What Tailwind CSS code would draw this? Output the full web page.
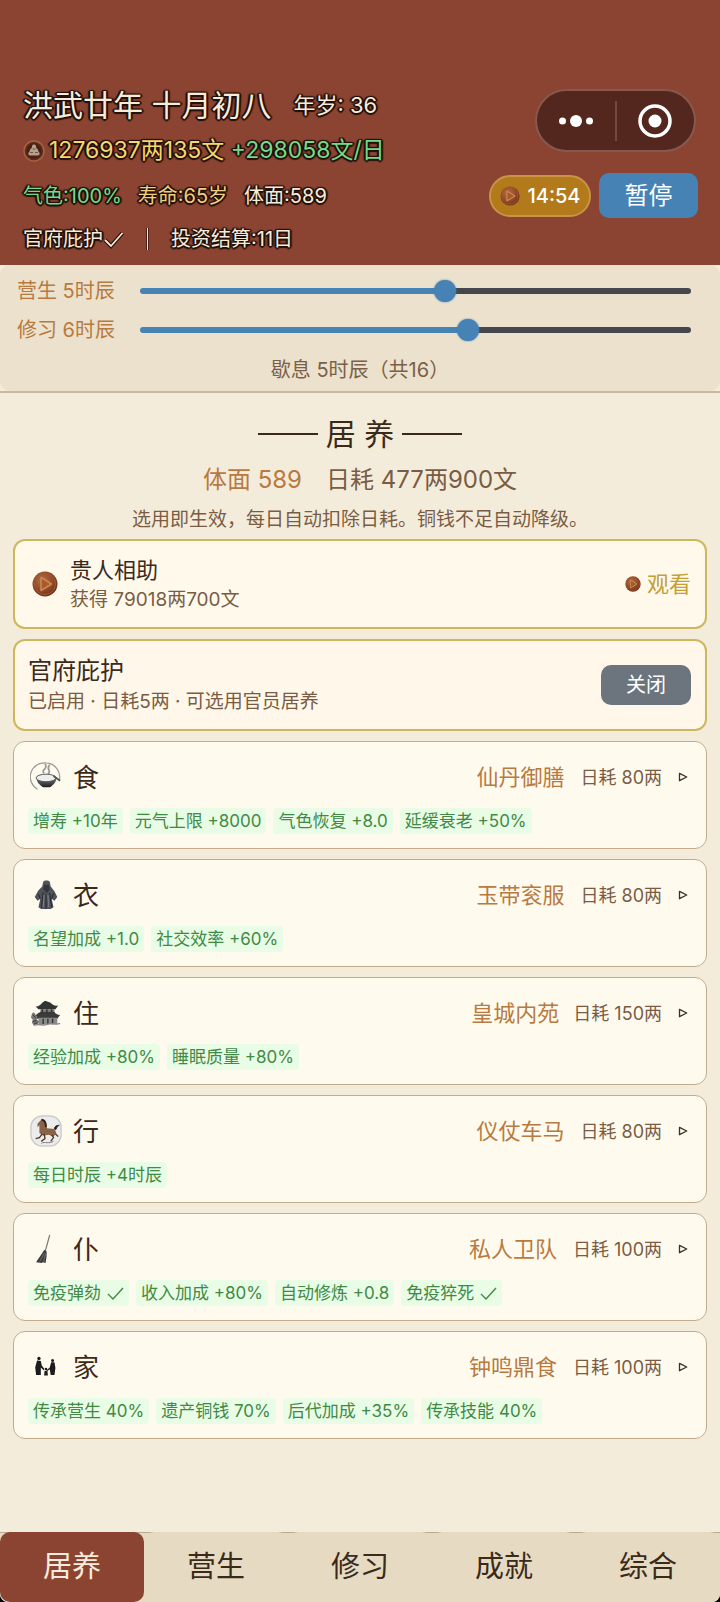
<!DOCTYPE html>
<html lang="zh-CN">
<head>
  <meta charset="UTF-8" />
  <meta name="viewport" content="width=device-width, initial-scale=1.0"/>
  <title>居养</title>
  <!-- Tailwind CSS CDN -->
  <script src="https://cdn.jsdelivr.net/npm/@tailwindcss/browser@4"></script>
</head>
<body class="bg-black font-[Inter,'Noto_Sans_CJK_SC',sans-serif] text-[#3b2a1a]">
  <!-- Degradados compartidos por los iconos -->
  <svg width="0" height="0" class="absolute" aria-hidden="true">
    <defs>
      <radialGradient id="bronze" cx="0.4" cy="0.35" r="0.7">
        <stop offset="0" stop-color="#b8704a"/><stop offset="0.6" stop-color="#8f4726"/><stop offset="1" stop-color="#6b3014"/>
      </radialGradient>
      <linearGradient id="ink" x1="0" y1="0" x2="0" y2="1">
        <stop offset="0" stop-color="#777"/><stop offset="1" stop-color="#1d1d1d"/>
      </linearGradient>
      <symbol id="play" viewBox="0 0 26 26">
        <circle cx="13" cy="13" r="12.5" fill="url(#bronze)"/>
        <circle cx="13" cy="13" r="10.5" fill="none" stroke="#a05a34" stroke-width="1"/>
        <path d="M9 6.500 19.500 13 9 19.500Z" fill="#a9572c" stroke="#c98a50" stroke-width="1.500" stroke-linejoin="round"/>
      </symbol>
      <symbol id="arrow" viewBox="0 0 10 10">
        <path d="M1.500 1.300 8.700 5 1.500 8.700Z" fill="none" stroke="#3b3025" stroke-width="1.300" stroke-linejoin="round"/>
      </symbol>
    </defs>
  </svg>

  <div class="min-h-screen flex flex-col bg-[#f4ecdb] rounded-b-lg overflow-hidden">
    <!-- Cabecera -->
    <header class="bg-[#8b4432] pt-[83px] pb-[7px] pl-[23px] pr-[22px] flex justify-between text-[#f7ecdc] [text-shadow:-1px_-1px_1px_#22100a,1px_-1px_1px_#22100a,-1px_1px_1px_#22100a,1px_1px_1px_#22100a,0_2px_1px_#22100a,2px_0_1px_#22100a,-2px_0_1px_#22100a]">
      <div class="flex flex-col whitespace-nowrap">
        <div class="h-[45px] flex items-center gap-[22px]">
          <h1 class="text-[30px]">洪武廿年 十月初八</h1>
          <span class="text-[22px]">年岁: 36</span>
        </div>
        <div class="h-[45px] flex items-center gap-1 text-[23px]">
          <svg class="size-[22px]" viewBox="0 0 22 22"><circle cx="11" cy="11" r="10" fill="#5d2a1b" stroke="#a3653f" stroke-width="1.500"/><circle cx="11" cy="11" r="7.500" fill="#4a2016"/><path d="M11 4.500c2 0 2.500 2 2 3.500 2 .5 2 2.500 2.500 3.500 1.500 1 1.500 4-.5 4H7c-2 0-2-3-.5-4C7 10.500 7 8.500 9 8c-.5-1.500 0-3.500 2-3.500Z" fill="#b5a08c"/><path d="M7 12.500h3m2 0h3M9.500 9h3" stroke="#6d5647" fill="none"/></svg>
          <span class="text-[#f5d76e]">1276937两135文 <span class="text-[#6fdc8c]">+298058文/日</span></span>
        </div>
        <div class="h-[46px] flex items-center gap-4 text-[20px]">
          <span class="text-[#6fdc8c]">气色:100%</span>
          <span class="text-[#f0d080]">寿命:65岁</span>
          <span>体面:589</span>
        </div>
        <div class="h-[39px] flex items-center gap-[22px] text-[20px]">
          <span class="flex items-center">官府庇护<svg class="w-[21px] h-[20px]" viewBox="0 0 21 20" fill="none"><path d="M2 11l6 6L19.500 4" stroke="#22100a" stroke-width="4"/><path d="M2 11l6 6L19.500 4" stroke="#f7ecdc" stroke-width="1.800"/></svg></span>
          <span class="w-[3px] h-[22px] bg-[#f7ecdc] border-x border-[#4a2016]"></span>
          <span>投资结算:11日</span>
        </div>
      </div>
      <div class="flex flex-col items-end gap-[21px] pt-[6px]">
        <!-- Botones del sistema -->
        <div class="w-[161px] h-[63px] mr-[2px] rounded-full bg-[#53271d] border-2 border-[#87594d] flex items-center">
          <button type="button" aria-label="更多" class="flex-1 h-full flex items-center justify-center"><svg class="w-[34px] h-[12px]" viewBox="0 0 34 12" fill="#fff"><circle cx="3.500" cy="6" r="3.500"/><circle cx="17" cy="6" r="6"/><circle cx="30.500" cy="6" r="3.500"/></svg></button>
          <span class="w-[2px] h-10 bg-[#75493e]"></span>
          <button type="button" aria-label="关闭" class="flex-1 h-full flex items-center justify-center"><svg class="size-[34px]" viewBox="0 0 34 34"><circle cx="17" cy="17" r="15" fill="none" stroke="#fff" stroke-width="3.500"/><circle cx="17" cy="17" r="6.500" fill="#fff"/></svg></button>
        </div>
        <div class="flex items-center gap-2">
          <button type="button" class="w-[102px] h-[42px] rounded-full bg-[#b27a1a] border-2 border-[#c99446] flex items-center justify-center gap-2 text-[20px] font-medium text-white"><svg class="size-[20px]"><use href="#play"/></svg>14:54</button>
          <button type="button" class="w-[99px] h-[45px] rounded-[10px] bg-[#4682b4] text-[24px] text-white [text-shadow:none]">暂停</button>
        </div>
      </div>
    </header>

    <!-- Reparto de horas -->
    <section class="border-b-2 border-[#c9b89a]">
      <div class="h-[126px] rounded-[10px] bg-[#ebe1cd] pt-[6px] text-[20px]">
        <div class="h-[39px] pl-[17px] pr-[29px] flex items-center gap-[21px]">
          <label for="work" class="w-[102px] whitespace-nowrap text-[#b87a40]">营生 5时辰</label>
          <input type="range" id="work" min="0" max="9" value="5" style="--fill:55.6%" class="flex-1 appearance-none h-[6px] rounded-full bg-[linear-gradient(to_right,#4682b4_var(--fill),#46464e_var(--fill))] [&::-webkit-slider-thumb]:appearance-none [&::-webkit-slider-thumb]:size-[22px] [&::-webkit-slider-thumb]:rounded-full [&::-webkit-slider-thumb]:bg-[#4682b4] [&::-webkit-slider-thumb]:shadow-[0_0_2px_#4682b4]" />
        </div>
        <div class="h-[39px] pl-[17px] pr-[29px] flex items-center gap-[21px]">
          <label for="study" class="w-[102px] whitespace-nowrap text-[#b87a40]">修习 6时辰</label>
          <input type="range" id="study" min="0" max="10" value="6" style="--fill:60%" class="flex-1 appearance-none h-[6px] rounded-full bg-[linear-gradient(to_right,#4682b4_var(--fill),#46464e_var(--fill))] [&::-webkit-slider-thumb]:appearance-none [&::-webkit-slider-thumb]:size-[22px] [&::-webkit-slider-thumb]:rounded-full [&::-webkit-slider-thumb]:bg-[#4682b4] [&::-webkit-slider-thumb]:shadow-[0_0_2px_#4682b4]" />
        </div>
        <p class="h-[42px] flex items-center justify-center text-[#7a6048]">歇息 5时辰（共16）</p>
      </div>
    </section>

    <main class="flex-1 px-[13px] pt-[18px]">
      <h2 class="h-[46px] flex items-center justify-center gap-2 text-[30px]"><span class="w-[60px] h-[2px] bg-[#3b2a1a]"></span>居 养<span class="w-[60px] h-[2px] bg-[#3b2a1a]"></span></h2>
      <p class="h-[46px] flex items-center justify-center gap-6 text-[24px] text-[#7a5c44]"><span class="text-[#b87a40]">体面 589</span><span>日耗 477两900文</span></p>
      <p class="h-9 leading-[34px] text-center text-[19px] text-[#7a5c44]">选用即生效，每日自动扣除日耗。铜钱不足自动降级。</p>

      <div class="flex flex-col gap-[10px]">
        <!-- Tarjetas destacadas -->
        <section class="h-[90px] rounded-[12px] border-2 border-[#cdb75f] bg-[#fff9ec] pl-[13px] pr-[14px] flex items-center">
          <svg class="size-[26px] ml-1 mr-3"><use href="#play"/></svg>
          <div class="flex-1 pt-[2px]">
            <h3 class="text-[22px] leading-[30px]">贵人相助</h3>
            <p class="text-[19px] leading-[30px] text-[#7a5c44]">获得 79018两700文</p>
          </div>
          <button type="button" class="flex items-center gap-[6px] text-[22px] text-[#c4a035]"><svg class="size-[16px]"><use href="#play"/></svg>观看</button>
        </section>
        <section class="h-[92px] rounded-[12px] border-2 border-[#cdb75f] bg-[#fff8ea] pl-[13px] pr-[14px] flex items-center">
          <div class="flex-1 pt-[2px]">
            <h3 class="text-[24px] leading-[32px]">官府庇护</h3>
            <p class="text-[19px] leading-[30px] text-[#7a5c44]">已启用 · 日耗5两 · 可选用官员居养</p>
          </div>
          <button type="button" class="w-[90px] h-10 rounded-[10px] bg-[#6c757d] text-[20px] text-white">关闭</button>
        </section>

        <!-- Categorías -->
        <section class="h-[108px] rounded-[12px] border border-[#c4ab8c] bg-[#fffaee] px-[14px] pt-3">
          <div class="h-[46px] flex items-center">
            <svg class="size-8 ml-[2px] mr-[11px]" viewBox="0 0 34 34" fill="none"><path d="M8 30A15 15 0 0 1 17 2a15 15 0 0 1 14 19" stroke="#999" stroke-width="1.300"/><path d="M15 13c-4-4 5-4 1-10m3 11c5-3-3-5 2-10" stroke="#999" stroke-width="1.800"/><path d="M7 18c0 6 5 8 7 10h7c3-2 7-5 7-10Z" fill="url(#ink)"/><ellipse cx="17" cy="18" rx="10.500" ry="4" fill="#eee" stroke="#555"/><path d="M25 16l7 5" stroke="#555" stroke-width="2"/></svg>
            <h3 class="flex-1 text-[26px]">食</h3>
            <span class="text-[22px] text-[#b87a40]">仙丹御膳</span><span class="ml-4 text-[18px] text-[#7a5c44]">日耗 80两</span><svg class="size-[10px] ml-4 mr-1"><use href="#arrow"/></svg>
          </div>
          <ul class="mt-2 flex gap-[7px] text-[17px] leading-[26px] text-[#3f8a45] whitespace-nowrap">
            <li class="px-[5px] rounded bg-[#e9fce6]">增寿 +10年</li><li class="px-[5px] rounded bg-[#e9fce6]">元气上限 +8000</li><li class="px-[5px] rounded bg-[#e9fce6]">气色恢复 +8.0</li><li class="px-[5px] rounded bg-[#e9fce6]">延缓衰老 +50%</li>
          </ul>
        </section>
        <section class="h-[108px] rounded-[12px] border border-[#c4ab8c] bg-[#fffaee] px-[14px] pt-3">
          <div class="h-[46px] flex items-center">
            <svg class="size-8 ml-[2px] mr-[11px]" viewBox="0 0 34 34"><path d="M14 3c1-2 6-2 7 0l1 5 4 5 3 6-3 4-3-2 2 9-3 2H12l-3-2 2-9-3 2-3-4 4-7 4-4Z" fill="#50535a"/><path d="M15 6h5l1 5-3 4-4-4Z" fill="#33363b"/><path d="M14 14l-2 17m5-15v16m4-17 2 15M9 16l2 5m14-6-2 6" stroke="#22252b" fill="none"/><path d="M15 17l-1 13m5-13 1 13" stroke="#858891" fill="none"/></svg>
            <h3 class="flex-1 text-[26px]">衣</h3>
            <span class="text-[22px] text-[#b87a40]">玉带衮服</span><span class="ml-4 text-[18px] text-[#7a5c44]">日耗 80两</span><svg class="size-[10px] ml-4 mr-1"><use href="#arrow"/></svg>
          </div>
          <ul class="mt-2 flex gap-[7px] text-[17px] leading-[26px] text-[#3f8a45] whitespace-nowrap">
            <li class="px-[5px] rounded bg-[#e9fce6]">名望加成 +1.0</li><li class="px-[5px] rounded bg-[#e9fce6]">社交效率 +60%</li>
          </ul>
        </section>
        <section class="h-[108px] rounded-[12px] border border-[#c4ab8c] bg-[#fffaee] px-[14px] pt-3">
          <div class="h-[46px] flex items-center">
            <svg class="size-8 ml-[2px] mr-[11px]" viewBox="0 0 34 34"><path d="M6 10c4 0 5-2 7-4l3-2 6 2c2 2 4 4 8 3l-3 4H9Z" fill="#333"/><path d="M11 13h15v4H11Z" fill="#777"/><path d="M3 20c4 0 5-3 8-4h15c1 2 3 3 6 3l-3 4H6Z" fill="#3a3a3a"/><path d="M9 22h20v7H9Z" fill="#8a8a8a"/><path d="M13 13v4m5-4v4m5-4v4M14 23v6m5-6v6m5-6v6" stroke="#333" stroke-width="1.500"/><path d="M2 18c2-3 3-1 4 1l2 2-1 3 3 2-2 3-4 1-2-3 1-3-2-2Z" fill="#777"/><path d="M3 19l3 3m-3 4 4-1m-3 4 4-2" stroke="#333" fill="none"/><path d="M4 30c6-2 9 1 14-1s9 1 14-1" stroke="#888" stroke-width="1.500" fill="none"/></svg>
            <h3 class="flex-1 text-[26px]">住</h3>
            <span class="text-[22px] text-[#b87a40]">皇城内苑</span><span class="ml-[14px] text-[18px] text-[#7a5c44]">日耗 150两</span><svg class="size-[10px] ml-4 mr-1"><use href="#arrow"/></svg>
          </div>
          <ul class="mt-2 flex gap-[7px] text-[17px] leading-[26px] text-[#3f8a45] whitespace-nowrap">
            <li class="px-[5px] rounded bg-[#e9fce6]">经验加成 +80%</li><li class="px-[5px] rounded bg-[#e9fce6]">睡眠质量 +80%</li>
          </ul>
        </section>
        <section class="h-[108px] rounded-[12px] border border-[#c4ab8c] bg-[#fffaee] px-[14px] pt-3">
          <div class="h-[46px] flex items-center">
            <svg class="size-8 ml-[2px] mr-[11px]" viewBox="0 0 34 34"><rect x="1" y="1" width="32" height="32" rx="12" fill="#ececec" stroke="#cbcbcb" stroke-width="1.500"/><path d="M8 9l4-4 4 2 2 7 8 1 2 4-3 4-5-2-6 1-4-3v-8l-2 2Z" fill="#8b6248"/><path d="M12 5c4 0 5 4 5 8" fill="none" stroke="#33241c" stroke-width="2"/><path d="M26 15c0-3 2-4 5-4-3 1-2 3-4 5" fill="#222" stroke="#222"/><path d="M13 20l-3 4-4 1m9-5 1 5-4 3m11-7 2 3-3 4m5-8 3 3" stroke="#4a3529" stroke-width="1.400" fill="none"/><path d="M12 30c4-2 8 1 13-2" stroke="#777" fill="none"/></svg>
            <h3 class="flex-1 text-[26px]">行</h3>
            <span class="text-[22px] text-[#b87a40]">仪仗车马</span><span class="ml-4 text-[18px] text-[#7a5c44]">日耗 80两</span><svg class="size-[10px] ml-4 mr-1"><use href="#arrow"/></svg>
          </div>
          <ul class="mt-2 flex gap-[7px] text-[17px] leading-[26px] text-[#3f8a45] whitespace-nowrap">
            <li class="px-[5px] rounded bg-[#e9fce6]">每日时辰 +4时辰</li>
          </ul>
        </section>
        <section class="h-[108px] rounded-[12px] border border-[#c4ab8c] bg-[#fffaee] px-[14px] pt-3">
          <div class="h-[46px] flex items-center">
            <svg class="size-8 ml-[2px] mr-[11px]" viewBox="0 0 34 34"><path d="M21 2 16 20" stroke="#777" stroke-width="1.300"/><path d="M15 18l2.500 1c.5 4 0 8-1 13l-3-1-1 1-6-1c2-4 6-8 8.500-13Z" fill="#3c3c3c"/><path d="M15.500 21l-5 9m6-8-2 9" stroke="#888" stroke-width=".7"/></svg>
            <h3 class="flex-1 text-[26px]">仆</h3>
            <span class="text-[22px] text-[#b87a40]">私人卫队</span><span class="ml-4 text-[18px] text-[#7a5c44]">日耗 100两</span><svg class="size-[10px] ml-4 mr-1"><use href="#arrow"/></svg>
          </div>
          <ul class="mt-2 flex gap-[7px] text-[17px] leading-[26px] text-[#3f8a45] whitespace-nowrap">
            <li class="px-[5px] rounded bg-[#e9fce6] flex items-center gap-[6px]">免疫弹劾<svg class="w-[17px] h-[15px]" viewBox="0 0 17 15" fill="none"><path d="M1 8l5 5L16 2" stroke="#3f8a45" stroke-width="1.400"/></svg></li><li class="px-[5px] rounded bg-[#e9fce6]">收入加成 +80%</li><li class="px-[5px] rounded bg-[#e9fce6]">自动修炼 +0.8</li><li class="px-[5px] rounded bg-[#e9fce6] flex items-center gap-[6px]">免疫猝死<svg class="w-[17px] h-[15px]" viewBox="0 0 17 15" fill="none"><path d="M1 8l5 5L16 2" stroke="#3f8a45" stroke-width="1.400"/></svg></li>
          </ul>
        </section>
        <section class="h-[108px] rounded-[12px] border border-[#c4ab8c] bg-[#fffaee] px-[14px] pt-3">
          <div class="h-[46px] flex items-center">
            <svg class="size-8 ml-[2px] mr-[11px]" viewBox="0 0 34 34" fill="#1c1c1c"><circle cx="9.500" cy="8" r="1.800"/><path d="M7.500 10l4 .5 1 5 3 4-1 1-3-3v8H6.500l-1-8Z"/><circle cx="24" cy="10" r="1.600"/><path d="M22.500 12h3.500l1 6-1 7.500h-4l-1-6-3 2-.5-1 3.500-3Z"/><circle cx="17" cy="19" r="1.300"/><path d="M15.500 21h3l.5 5h-4Z"/></svg>
            <h3 class="flex-1 text-[26px]">家</h3>
            <span class="text-[22px] text-[#b87a40]">钟鸣鼎食</span><span class="ml-4 text-[18px] text-[#7a5c44]">日耗 100两</span><svg class="size-[10px] ml-4 mr-1"><use href="#arrow"/></svg>
          </div>
          <ul class="mt-2 flex gap-[7px] text-[17px] leading-[26px] text-[#3f8a45] whitespace-nowrap">
            <li class="px-[5px] rounded bg-[#e9fce6]">传承营生 40%</li><li class="px-[5px] rounded bg-[#e9fce6]">遗产铜钱 70%</li><li class="px-[5px] rounded bg-[#e9fce6]">后代加成 +35%</li><li class="px-[5px] rounded bg-[#e9fce6]">传承技能 40%</li>
          </ul>
        </section>
      </div>
    </main>

    <!-- Navegación inferior -->
    <nav class="h-[70px] bg-[#e6dac3] border-t border-[#b9ab90] grid grid-cols-5 text-[29px]">
      <button type="button" class="-mt-px rounded-[10px] bg-[#8b4432] text-[#f7ecdc]">居养</button>
      <button type="button" class="-mt-px rounded-[10px] bg-[#e6dac3]">营生</button>
      <button type="button" class="-mt-px rounded-[10px] bg-[#e6dac3]">修习</button>
      <button type="button" class="-mt-px rounded-[10px] bg-[#e6dac3]">成就</button>
      <button type="button" class="-mt-px rounded-[10px] bg-[#e6dac3]">综合</button>
    </nav>
  </div>
</body>
</html>
